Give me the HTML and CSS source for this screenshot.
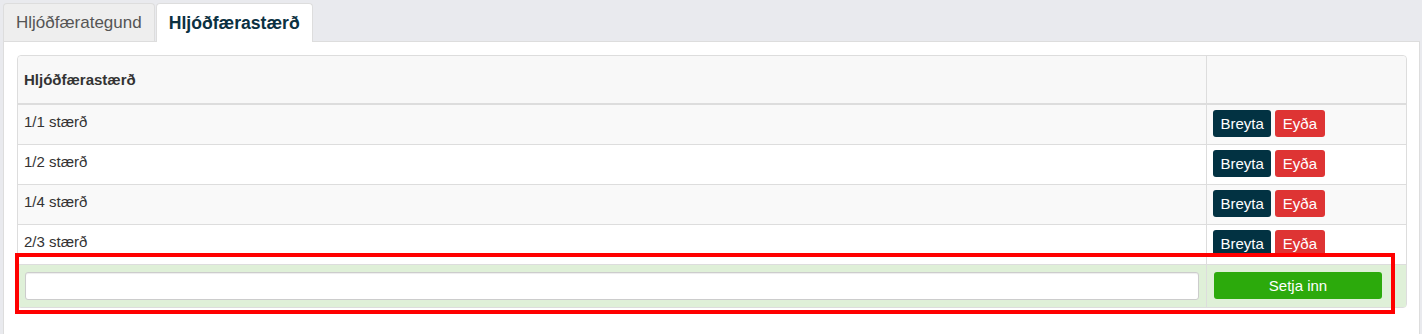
FILE: index.html
```html
<!DOCTYPE html>
<html lang="is">
<head>
<meta charset="utf-8">
<title>Hljóðfærastærð</title>
<link rel="stylesheet" href="styles.css">
</head>
<body>
<div class="page">
  <ul class="tabs">
    <li class="tab">Hljóðfærategund</li>
    <li class="tab active">Hljóðfærastærð</li>
  </ul>
  <div class="panel">
    <div class="table-wrap">
      <table class="grid">
        <thead>
          <tr><th class="col-name">Hljóðfærastærð</th><th class="col-act"></th></tr>
        </thead>
        <tbody>
          <tr class="odd"><td class="name">1/1 stærð</td><td class="act"><span class="btn edit">Breyta</span><span class="btn del">Eyða</span></td></tr>
          <tr><td class="name">1/2 stærð</td><td class="act"><span class="btn edit">Breyta</span><span class="btn del">Eyða</span></td></tr>
          <tr class="odd"><td class="name">1/4 stærð</td><td class="act"><span class="btn edit">Breyta</span><span class="btn del">Eyða</span></td></tr>
          <tr><td class="name">2/3 stærð</td><td class="act"><span class="btn edit">Breyta</span><span class="btn del">Eyða</span></td></tr>
          <tr class="add"><td class="add-name"><input class="field" type="text"></td><td class="add-act"><span class="btn insert">Setja inn</span></td></tr>
        </tbody>
      </table>
      <div class="highlight"></div>
    </div>
  </div>
</div>
</body>
</html>
```
FILE: styles.css
```css
html, body {
  margin: 0;
  padding: 0;
}
body {
  background: #e9eaee;
  font-family: "Liberation Sans", Arial, sans-serif;
  font-size: 15px;
  color: #333;
  height: 334px;
  overflow: hidden;
}
.page {
  padding: 3px 2px 0 3px;
}
.tabs {
  list-style: none;
  margin: 0;
  padding: 0;
  display: flex;
  gap: 1px;
  position: relative;
  z-index: 1;
}
.tab {
  height: 38px;
  box-sizing: border-box;
  padding: 0 12px;
  display: flex;
  align-items: center;
  font-size: 17px;
  color: #555;
  background: #eeeeee;
  border: 1px solid #dddddd;
  border-bottom: none;
  border-radius: 4px 4px 0 0;
}
.tab.active {
  background: #fff;
  color: #0b3142;
  font-weight: bold;
  font-size: 17.6px;
  height: 39px;
  margin-bottom: -1px;
}
.panel {
  background: #fff;
  border: 1px solid #dddddd;
  border-bottom: none;
  padding: 13px 12px 40px 13px;
  height: 300px;
  box-sizing: border-box;
}
.table-wrap {
  position: relative;
}
.grid {
  width: 100%;
  border-collapse: separate;
  border-spacing: 0;
  border: 1px solid #dddddd;
  border-radius: 4px;
  table-layout: fixed;
}
.grid th {
  text-align: left;
  font-weight: bold;
  line-height: 20px;
  padding: 14px 6px 13px;
  background: #f8f8f8;
  border-bottom: 2px solid #dddddd;
}
.grid .col-name {
  border-top-left-radius: 4px;
}
.grid .col-act {
  width: 187px;
  border-left: 1px solid #dddddd;
  border-top-right-radius: 4px;
}
.grid td {
  line-height: 20px;
  vertical-align: top;
  border-top: 1px solid #dddddd;
}
.grid tbody tr:first-child td {
  border-top: none;
}
.grid tr.odd td {
  background: #f9f9f9;
}
.grid td.name {
  padding: 7px 6px 12px;
}
.grid td.act {
  padding: 5px 6px 7px;
  border-left: 1px solid #dddddd;
}
.btn {
  display: inline-flex;
  align-items: center;
  justify-content: center;
  height: 27px;
  padding: 0 7.5px;
  border-radius: 3px;
  color: #fff;
  font-size: 15px;
  line-height: 1;
  vertical-align: top;
}
.btn.edit {
  background: #023242;
  margin-right: 4px;
}
.btn.del {
  background: #de3434;
  padding: 0 7.5px;
}
.grid tr.add td {
  background: #dff0d8;
  padding: 7px;
}
.grid td.add-act {
  border-left: 1px solid #dddddd;
}
.field {
  display: block;
  width: 100%;
  height: 28px;
  box-sizing: border-box;
  margin: 0;
  border: 1px solid #cccccc;
  border-radius: 3px;
  background: #fff;
  box-shadow: inset 0 1px 1px rgba(0,0,0,0.075);
}
.btn.insert {
  display: flex;
  width: 168px;
  height: 27px;
  padding: 0;
  background: #2caa0c;
}
.highlight {
  position: absolute;
  left: -2px;
  top: 198px;
  width: 1380px;
  height: 61px;
  box-sizing: border-box;
  border: 4px solid #ff0000;
  pointer-events: none;
}
```
